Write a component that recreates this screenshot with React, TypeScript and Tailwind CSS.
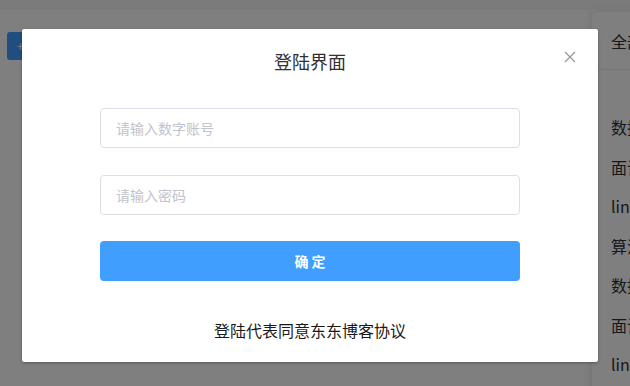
import React, { useState } from 'react';

const categories = ['数据结构', '面试题', 'linux', '算法', '数据库', '面试经验', 'linux命令'];

const LoginDialog = () => {
  const [form, setForm] = useState({ account: '', password: '' });

  const handleChange = (e: React.ChangeEvent<HTMLInputElement>) => {
    const { name, value } = e.target;
    setForm(prev => ({ ...prev, [name]: value }));
  };

  return (
    <div className="absolute left-[22px] top-[29px] w-[576px] h-[333px] bg-white rounded-[2px] shadow-[0_1px_3px_rgba(0,0,0,0.3)]">
      <div className="relative pt-[20px] pb-[10px] px-[20px]">
        <h2 className="text-center text-[18px] leading-[24px] text-[#303133]">登陆界面</h2>
        <button className="absolute right-[22px] top-[22px] text-[#909399]">
          <svg width="12" height="12" viewBox="0 0 12 12">
            <path d="M1 1 L11 11 M11 1 L1 11" stroke="currentColor" strokeWidth="1.1" fill="none" />
          </svg>
        </button>
      </div>

      <form className="flex flex-col items-center pt-[25px]" onSubmit={e => e.preventDefault()}>
        <input
          name="account"
          value={form.account}
          onChange={handleChange}
          placeholder="请输入数字账号"
          className="w-[420px] h-[40px] px-[15px] text-[14px] text-[#606266] border border-[#dcdfe6] rounded-[4px] outline-none placeholder:text-[#c0c4cc]"
        />
        <input
          name="password"
          type="password"
          value={form.password}
          onChange={handleChange}
          placeholder="请输入密码"
          className="mt-[27px] w-[420px] h-[40px] px-[15px] text-[14px] text-[#606266] border border-[#dcdfe6] rounded-[4px] outline-none placeholder:text-[#c0c4cc]"
        />
        <button
          type="submit"
          className="mt-[26px] w-[420px] h-[40px] bg-[#409eff] text-white text-[14px] font-bold rounded-[4px]"
        >
          确 定
        </button>
        <p className="mt-[38px] text-[16px] leading-[22px] text-[#1a1a1a]">登陆代表同意东东博客协议</p>
      </form>
    </div>
  );
};

const App = () => {
  return (
    <div
      className="relative w-[630px] h-[386px] overflow-hidden bg-[#f6f6f6]"
      style={{ fontFamily: '"Noto Sans CJK SC", "Noto Sans", sans-serif' }}
    >
      <div className="mt-[10px] h-[376px] bg-white flex items-start">
        <div className="w-[591px] shrink-0 pl-[7px] pt-[22px]">
          <button className="h-[28px] px-[10px] bg-[#409eff] text-white text-[12px] rounded-[3px]">+ 写博客</button>
        </div>
        <div className="w-[220px] shrink-0 mt-[1px] h-[400px] border border-[#ebeef5] rounded-[4px] shadow-[0_2px_12px_rgba(0,0,0,0.1)] bg-white">
          <div className="h-[58px] px-[19px] flex items-center border-b border-[#ebeef5] text-[16px] text-[#303133]">全部分类</div>
          <ul className="pt-[46px] px-[19px] flex flex-col gap-[17.5px]">
            {categories.map(c => (
              <li key={c} className="h-[22px] leading-[22px] text-[16px] text-[#303133] whitespace-nowrap">{c}</li>
            ))}
          </ul>
        </div>
      </div>

      <div className="absolute inset-0 bg-black/50" />
      <LoginDialog />
    </div>
  );
};

export default App;
